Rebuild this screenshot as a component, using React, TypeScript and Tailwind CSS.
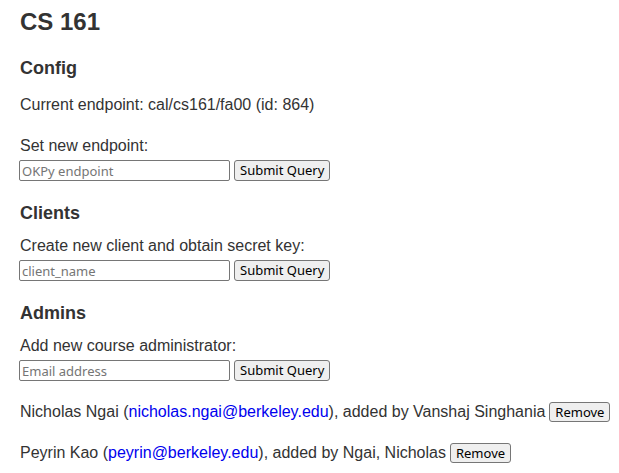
import React from "react";

const body = "font-['Liberation_Sans',Arial,sans-serif]";
const ctl = "font-['Noto_Sans',sans-serif] text-[13px]";

function QueryForm({ placeholder }: { placeholder: string }) {
  return (
    <form className="flex items-center gap-1 mt-1 -ml-px" onSubmit={(e) => e.preventDefault()}>
      <input
        type="text"
        placeholder={placeholder}
        className={`${ctl} w-[211px] h-[21px] px-[2px] border border-[#767676] rounded-[2px] text-black placeholder:text-[#757575] bg-white`}
      />
      <button
        type="submit"
        className={`${ctl} h-[21px] px-[5px] border border-[#767676] rounded-[3px] bg-[#efefef] text-black leading-none`}
      >
        Submit Query
      </button>
    </form>
  );
}

function AdminRow({ name, email, addedBy, first }: { name: string; email: string; addedBy: string; first?: boolean }) {
  return (
    <p className={`flex items-center whitespace-nowrap leading-[22px] ${first ? "mt-[20px]" : "mt-[19px]"}`}>
      <span>
        {name} (
        <a href={`mailto:${email}`} className="text-[#0000ee]">
          {email}
        </a>
        ), added by {addedBy}
      </span>
      <button className={`${ctl} ml-1 h-[20px] px-[5px] border border-[#767676] rounded-[3px] bg-[#efefef] text-black leading-none`}>
        Remove
      </button>
    </p>
  );
}

export default function App() {
  return (
    <div className={`${body} text-[#333] text-[16px] leading-[20px] px-5 pt-[8px] bg-white min-h-[473px]`}>
      <h1 className="text-[24px] font-bold leading-[28px]">CS 161</h1>

      <h2 className="text-[18px] font-bold mt-[20px] leading-[24px]">Config</h2>
      <p className="mt-[15px]">Current endpoint: cal/cs161/fa00 (id: 864)</p>
      <p className="mt-[21px]">Set new endpoint:</p>
      <QueryForm placeholder="OKPy endpoint" />

      <h2 className="text-[18px] font-bold mt-[20px] leading-[24px]">Clients</h2>
      <p className="mt-[11px]">Create new client and obtain secret key:</p>
      <QueryForm placeholder="client_name" />

      <h2 className="text-[18px] font-bold mt-[20px] leading-[24px]">Admins</h2>
      <p className="mt-[11px]">Add new course administrator:</p>
      <QueryForm placeholder="Email address" />

      <AdminRow first name="Nicholas Ngai" email="nicholas.ngai@berkeley.edu" addedBy="Vanshaj Singhania" />
      <AdminRow name="Peyrin Kao" email="peyrin@berkeley.edu" addedBy="Ngai, Nicholas" />
    </div>
  );
}
